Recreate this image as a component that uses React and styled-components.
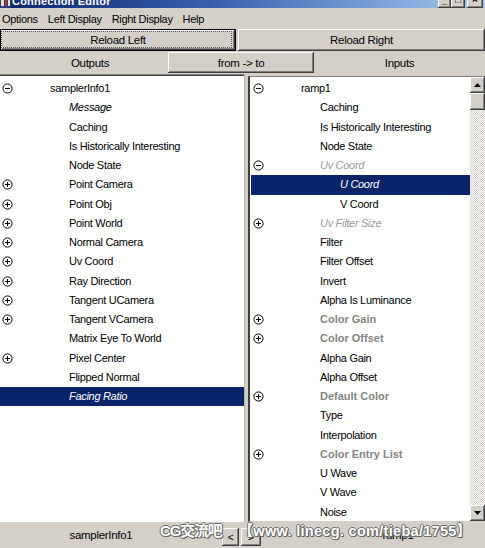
import React from 'react';
import styled, { createGlobalStyle } from 'styled-components';

const Global = createGlobalStyle`
  html, body { margin: 0; padding: 0; background: #d4d0c8; }
  body {
    font-family: "Liberation Sans", Arial, sans-serif;
    font-size: 11px;
    color: #000;
  }
`;

const Window = styled.div`
  position: relative;
  width: 485px;
  height: 548px;
  overflow: hidden;
  display: flex;
  flex-direction: column;
  background: #d4d0c8;
`;

const TitleBar = styled.div`
  height: 8px;
  flex: none;
  display: flex;
  align-items: flex-end;
  overflow: hidden;
  background: linear-gradient(90deg, #0a246a 0%, #3a62b0 45%, #a6caf0 100%);
`;

const TitleIcon = styled.svg`
  width: 11px;
  height: 14px;
  flex: none;
`;

const TitleText = styled.span`
  color: #fff;
  font-weight: bold;
  font-size: 11px;
  line-height: 13px;
  margin-left: 1px;
  letter-spacing: 0.2px;
  white-space: nowrap;
`;

const TitleButtons = styled.div`
  margin-left: auto;
  display: flex;
  align-items: flex-end;
  margin-right: 2px;
`;

const TitleButton = styled.div`
  width: ${p => p.$w}px;
  height: 14px;
  margin-left: ${p => p.$gap || 0}px;
  background: #d4d0c8;
  box-shadow: inset -1px -1px #404040, inset 1px 1px #fff, inset -2px -2px #808080;
  display: flex;
  align-items: flex-end;
  justify-content: center;
  font-weight: bold;
  font-size: 10px;
  line-height: 10px;
  padding-bottom: 3px;
  box-sizing: border-box;
`;

const MenuBar = styled.div`
  height: 20px;
  flex: none;
  display: flex;
  align-items: center;
  padding-left: 2px;
  gap: 10px;
  padding-top: 1px;
  box-sizing: border-box;
  letter-spacing: -0.3px;
`;

const MenuItem = styled.span`
  line-height: 14px;
  white-space: nowrap;
`;

const ButtonRow = styled.div`
  height: ${p => p.$h}px;
  flex: none;
  display: flex;
  align-items: ${p => p.$align || 'stretch'};
  padding-top: ${p => p.$pt || 0}px;
  box-sizing: border-box;
  gap: ${p => p.$gap || 0}px;
`;

const RaisedButton = styled.div`
  width: ${p => (p.$w ? `${p.$w}px` : 'auto')};
  flex: ${p => (p.$w ? 'none' : '1')};
  height: ${p => (p.$h ? `${p.$h}px` : 'auto')};
  box-sizing: border-box;
  display: flex;
  align-items: center;
  justify-content: center;
  position: relative;
  background: #d4d0c8;
  letter-spacing: -0.3px;
  font-size: 11.5px;
  box-shadow: inset -1px -1px #404040, inset 1px 1px #fff, inset -2px -2px #808080;
  ${p =>
    p.$focused &&
    `
    box-shadow: inset -1px -1px #000, inset 1px 1px #000, inset -2px -2px #404040, inset 2px 2px #fff, inset -3px -3px #808080;
    &::after {
      content: '';
      position: absolute;
      inset: 2px 4px 3px 1px;
      border: 1px dotted #555;
    }
  `}
`;

const HeaderLabel = styled.div`
  width: ${p => (p.$w ? `${p.$w}px` : 'auto')};
  flex: ${p => (p.$w ? 'none' : '1')};
  display: flex;
  align-items: center;
  justify-content: center;
  letter-spacing: -0.3px;
  font-size: 11.5px;
  padding-left: ${p => p.$pl || 0}px;
  box-sizing: border-box;
`;

const ListsArea = styled.div`
  flex: 1;
  display: flex;
  min-height: 0;
`;

const LeftPane = styled.div`
  width: 244px;
  flex: none;
  background: #fff;
  border-top: 1px solid #808080;
  box-shadow: inset 0 1px #404040;
  padding-top: 4px;
  box-sizing: border-box;
  overflow: hidden;
`;

const Divider = styled.div`
  width: 3px;
  flex: none;
  background: #d4d0c8;
  border-left: 1px solid #b8b4ac;
`;

const RightPane = styled.div`
  flex: 1;
  display: flex;
  margin-top: 2px;
  border-top: 1px solid #808080;
  border-left: 2px solid #404040;
  border-bottom: 1px solid #d4d0c8;
  min-width: 0;
`;

const RightList = styled.div`
  flex: 1;
  background: #fff;
  padding-left: 1px;
  padding-top: 2px;
  box-sizing: border-box;
  overflow: hidden;
`;

const Row = styled.div`
  height: 19.25px;
  display: flex;
  align-items: center;
  background: ${p => (p.$selected ? '#0a246a' : 'transparent')};
  color: ${p => (p.$selected ? '#fff' : p.$italic && p.$muted ? '#9a9a9a' : p.$muted ? '#858585' : '#000')};
  font-style: ${p => (p.$italic ? 'italic' : 'normal')};
  font-weight: ${p => (p.$bold ? 'bold' : 'normal')};
  white-space: nowrap;
`;

const IconSlot = styled.div`
  width: 12px;
  height: 12px;
  flex: none;
  margin-left: 1px;
  display: flex;
  align-items: center;
  justify-content: center;
`;

const Label = styled.span`
  padding-left: ${p => p.$indent - 13}px;
  letter-spacing: ${p => (p.$bold ? '0' : '-0.3px')};
  font-size: 11px;
  line-height: 19px;
`;

const Scrollbar = styled.div`
  width: 15px;
  flex: none;
  display: flex;
  flex-direction: column;
  background: repeating-conic-gradient(#d4d0c8 0% 25%, #fff 0% 50%) 0 0 / 2px 2px;
`;

const ScrollButton = styled.div`
  height: ${p => p.$h}px;
  flex: none;
  background: #d4d0c8;
  box-sizing: border-box;
  box-shadow: inset -1px -1px #404040, inset 1px 1px #fff, inset -2px -2px #808080;
  display: flex;
  align-items: center;
  justify-content: center;
`;

const ScrollTrack = styled.div`
  flex: 1;
`;

const BottomBar = styled.div`
  height: 26px;
  flex: none;
  display: flex;
  align-items: center;
  letter-spacing: -0.3px;
  font-size: 11.5px;
`;

const BottomLabel = styled.div`
  width: ${p => (p.$w ? `${p.$w}px` : 'auto')};
  flex: ${p => (p.$w ? 'none' : '1')};
  text-align: center;
  padding-left: ${p => p.$pl || 0}px;
  box-sizing: border-box;
`;

const ArrowButton = styled.div`
  width: ${p => p.$w}px;
  height: 18px;
  margin-left: ${p => p.$ml || 0}px;
  margin-top: 4px;
  flex: none;
  background: #d4d0c8;
  box-sizing: border-box;
  box-shadow: inset -1px -1px #404040, inset 1px 1px #fff, inset -2px -2px #808080;
  display: flex;
  align-items: center;
  justify-content: center;
  font-size: 11px;
  line-height: 11px;
`;

const Watermark = styled.div`
  position: absolute;
  left: 160px;
  top: 521px;
  display: flex;
  align-items: center;
  gap: 17px;
  color: #fff;
  font-family: "Liberation Sans", "Noto Sans CJK SC", sans-serif;
  font-weight: bold;
  white-space: nowrap;
  pointer-events: none;
  text-shadow: 1px 0 #6b6b6b, -1px 0 #6b6b6b, 0 1px #6b6b6b, 0 -1px #6b6b6b, 1px 1px #555;
`;

const WatermarkPart = styled.span`
  font-size: ${p => p.$size}px;
  letter-spacing: ${p => p.$ls}px;
  line-height: 20px;
`;

const ExpandIcon = ({ type, color }) => (
  <svg width="11" height="11" viewBox="0 0 11 11">
    <circle cx="5.5" cy="5.5" r="4.6" fill="none" stroke={color} strokeWidth="1" />
    <line x1="3" y1="5.5" x2="8" y2="5.5" stroke={color} strokeWidth="1" />
    {type === 'plus' && <line x1="5.5" y1="3" x2="5.5" y2="8" stroke={color} strokeWidth="1" />}
  </svg>
);

const Triangle = ({ dir }) => (
  <svg width="7" height="4" viewBox="0 0 7 4">
    {dir === 'up' ? <polygon points="3.5,0 7,4 0,4" fill="#000" /> : <polygon points="0,0 7,0 3.5,4" fill="#000" />}
  </svg>
);

const INDENT = [50, 69, 89];

const leftItems = [
  { icon: 'minus', level: 0, label: 'samplerInfo1' },
  { level: 1, label: 'Message', italic: true },
  { level: 1, label: 'Caching' },
  { level: 1, label: 'Is Historically Interesting' },
  { level: 1, label: 'Node State' },
  { icon: 'plus', level: 1, label: 'Point Camera' },
  { icon: 'plus', level: 1, label: 'Point Obj' },
  { icon: 'plus', level: 1, label: 'Point World' },
  { icon: 'plus', level: 1, label: 'Normal Camera' },
  { icon: 'plus', level: 1, label: 'Uv Coord' },
  { icon: 'plus', level: 1, label: 'Ray Direction' },
  { icon: 'plus', level: 1, label: 'Tangent UCamera' },
  { icon: 'plus', level: 1, label: 'Tangent VCamera' },
  { level: 1, label: 'Matrix Eye To World' },
  { icon: 'plus', level: 1, label: 'Pixel Center' },
  { level: 1, label: 'Flipped Normal' },
  { level: 1, label: 'Facing Ratio', italic: true, selected: true },
];

const rightItems = [
  { icon: 'minus', level: 0, label: 'ramp1' },
  { level: 1, label: 'Caching' },
  { level: 1, label: 'Is Historically Interesting' },
  { level: 1, label: 'Node State' },
  { icon: 'minus', level: 1, label: 'Uv Coord', italic: true, muted: true },
  { level: 2, label: 'U Coord', italic: true, selected: true },
  { level: 2, label: 'V Coord' },
  { icon: 'plus', level: 1, label: 'Uv Filter Size', italic: true, muted: true },
  { level: 1, label: 'Filter' },
  { level: 1, label: 'Filter Offset' },
  { level: 1, label: 'Invert' },
  { level: 1, label: 'Alpha Is Luminance' },
  { icon: 'plus', level: 1, label: 'Color Gain', bold: true, muted: true },
  { icon: 'plus', level: 1, label: 'Color Offset', bold: true, muted: true },
  { level: 1, label: 'Alpha Gain' },
  { level: 1, label: 'Alpha Offset' },
  { icon: 'plus', level: 1, label: 'Default Color', bold: true, muted: true },
  { level: 1, label: 'Type' },
  { level: 1, label: 'Interpolation' },
  { icon: 'plus', level: 1, label: 'Color Entry List', bold: true, muted: true },
  { level: 1, label: 'U Wave' },
  { level: 1, label: 'V Wave' },
  { level: 1, label: 'Noise' },
];

const TreeRows = ({ items }) =>
  items.map((it, i) => (
    <Row key={i} $selected={it.selected} $italic={it.italic} $bold={it.bold} $muted={it.muted}>
      <IconSlot>{it.icon && <ExpandIcon type={it.icon} color={it.selected ? '#fff' : '#000'} />}</IconSlot>
      <Label $indent={INDENT[it.level]} $bold={it.bold}>{it.label}</Label>
    </Row>
  ));

export default function App() {
  return (
    <Window>
      <Global />
      <TitleBar>
        <TitleIcon viewBox="0 0 11 14">
          <rect x="0" y="0" width="11" height="14" fill="#2a3f7a" />
          <rect x="1" y="6" width="3" height="6" fill="#e8e0c0" />
          <rect x="5" y="6" width="2" height="6" fill="#c03030" />
          <rect x="8" y="6" width="2" height="6" fill="#e8e0c0" />
        </TitleIcon>
        <TitleText>Connection Editor</TitleText>
        <TitleButtons>
          <TitleButton $w={13}>_</TitleButton>
          <TitleButton $w={14}>□</TitleButton>
          <TitleButton $w={16} $gap={2}>×</TitleButton>
        </TitleButtons>
      </TitleBar>
      <MenuBar>
        <MenuItem>Options</MenuItem>
        <MenuItem>Left Display</MenuItem>
        <MenuItem>Right Display</MenuItem>
        <MenuItem>Help</MenuItem>
      </MenuBar>
      <ButtonRow $h={23} $pt={1} $gap={2}>
        <RaisedButton $w={236} $focused>Reload Left</RaisedButton>
        <RaisedButton>Reload Right</RaisedButton>
      </ButtonRow>
      <ButtonRow $h={23} $align="center">
        <HeaderLabel $w={168} $pl={12}>Outputs</HeaderLabel>
        <RaisedButton $w={146} $h={21}>from -&gt; to</RaisedButton>
        <HeaderLabel>Inputs</HeaderLabel>
      </ButtonRow>
      <ListsArea>
        <LeftPane>
          <TreeRows items={leftItems} />
        </LeftPane>
        <Divider />
        <RightPane>
          <RightList>
            <TreeRows items={rightItems} />
          </RightList>
          <Scrollbar>
            <ScrollButton $h={16}><Triangle dir="up" /></ScrollButton>
            <ScrollButton $h={17} />
            <ScrollTrack />
            <ScrollButton $h={16}><Triangle dir="down" /></ScrollButton>
          </Scrollbar>
        </RightPane>
      </ListsArea>
      <BottomBar>
        <BottomLabel $w={202}>samplerInfo1</BottomLabel>
        <ArrowButton $w={17} $ml={20}>&lt;</ArrowButton>
        <ArrowButton $w={20} $ml={2}>&gt;</ArrowButton>
        <BottomLabel $pl={50}>ramp1</BottomLabel>
      </BottomBar>
      <Watermark>
        <WatermarkPart $size={15} $ls={-1.2}>CG交流吧</WatermarkPart>
        <WatermarkPart $size={14.5} $ls={0.3}>【www. linecg. com/tieba/1755】</WatermarkPart>
      </Watermark>
    </Window>
  );
}
